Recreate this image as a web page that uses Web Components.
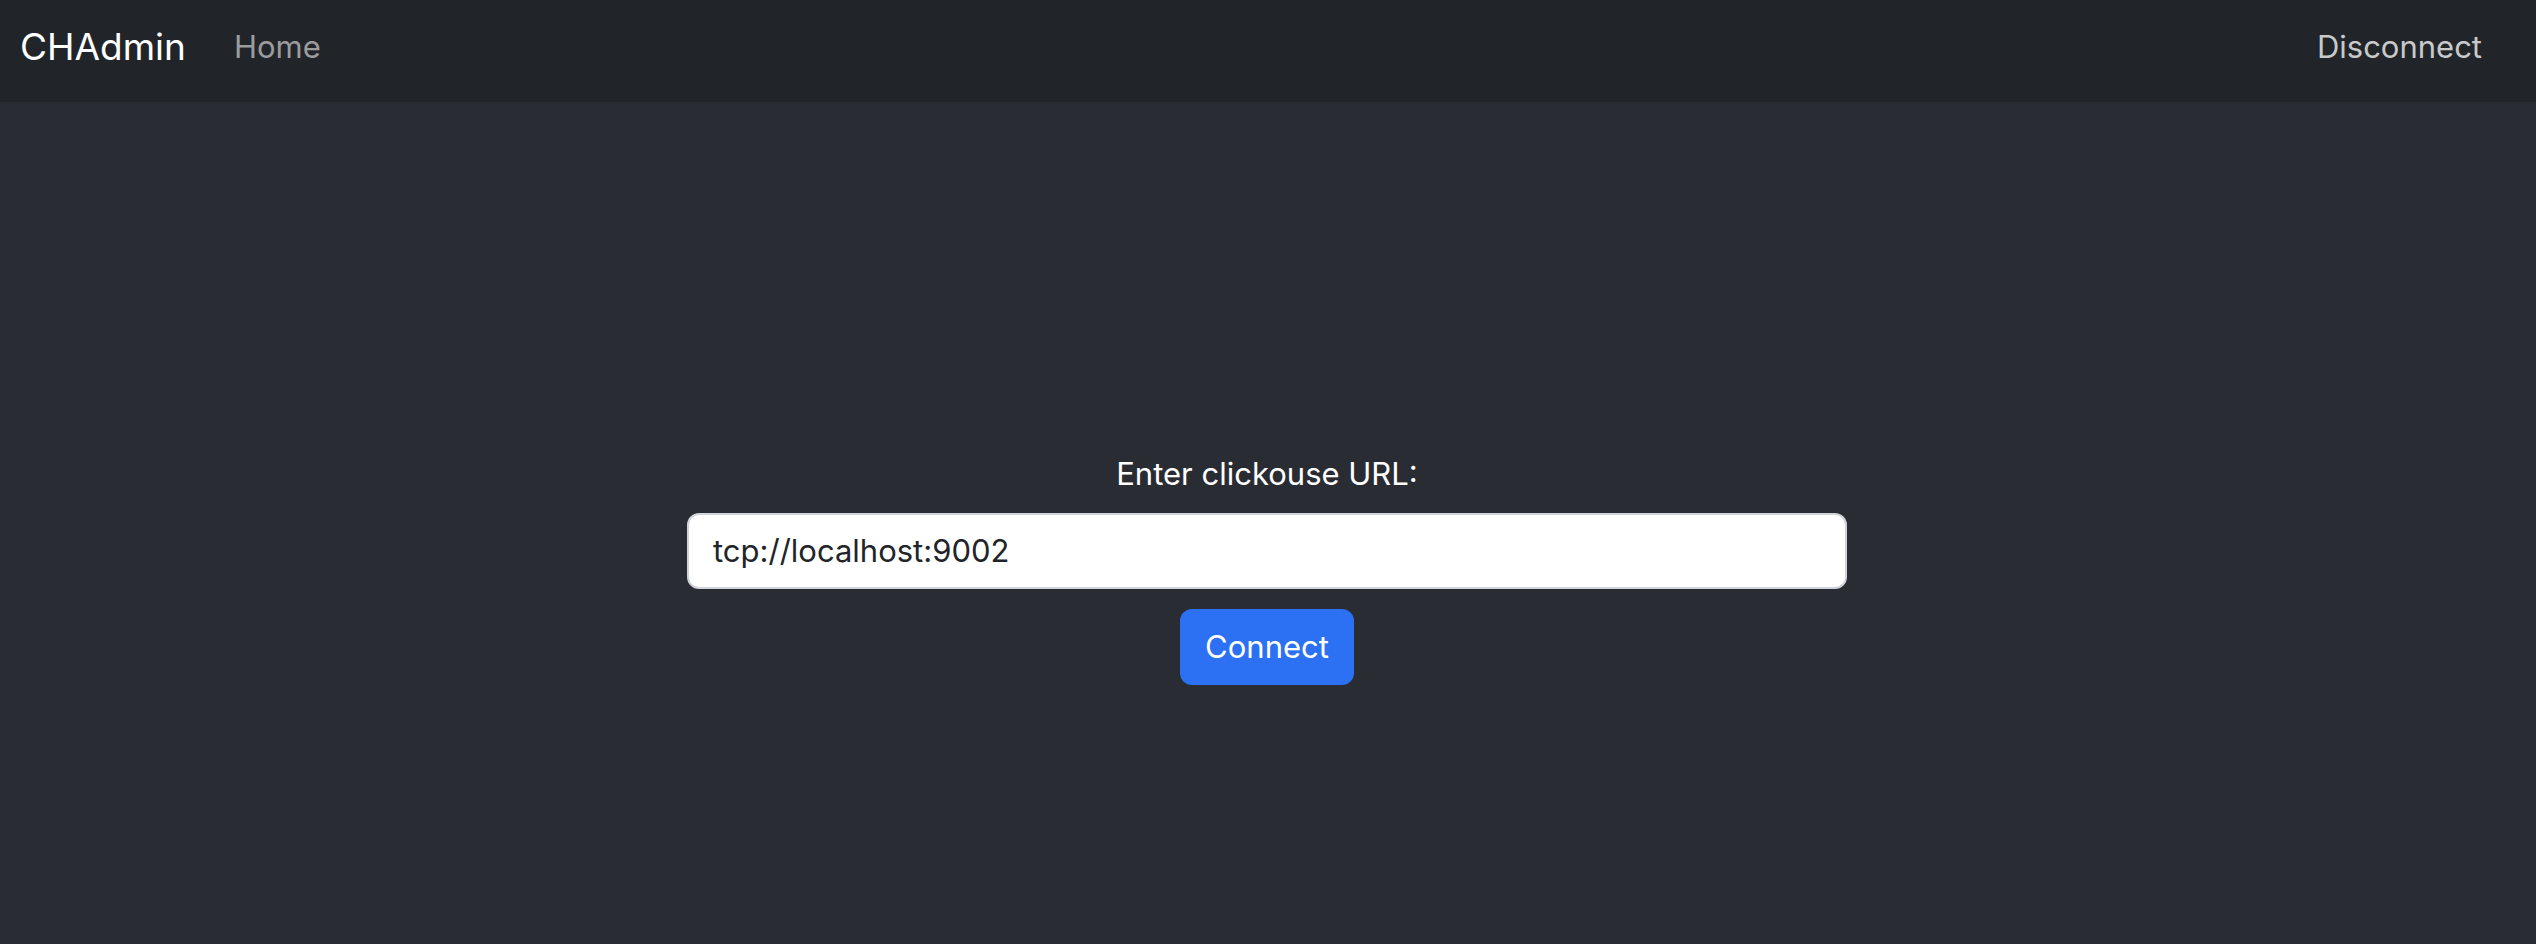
<!DOCTYPE html>
<html lang="en">
<head>
<meta charset="utf-8">
<meta name="viewport" content="width=device-width, initial-scale=1">
<title>CHAdmin</title>
<style>
  body { margin: 0; background: #2a2c34; color: #fff; font: 31px/48px Inter, "Liberation Sans", sans-serif; }
</style>
</head>
<body>
<ch-app>
  <ch-navbar slot="header" brand="CHAdmin">
    <ch-nav-link href="#home">Home</ch-nav-link>
    <ch-nav-link slot="end" href="#disconnect" active>Disconnect</ch-nav-link>
  </ch-navbar>
  <ch-connect-form url="tcp://localhost:9002">Enter clickouse URL:</ch-connect-form>
</ch-app>
<script>
class ChElement extends HTMLElement {
  constructor() {
    super();
    this.attachShadow({ mode: 'open' }).innerHTML = this.constructor.markup;
  }
}

customElements.define('ch-app', class extends ChElement {
  static markup = `
    <style>
      :host { display: flex; flex-direction: column; min-height: 100vh; }
      main { flex: 1; display: grid; align-content: center; justify-items: center; padding: 88px 2px 0 0; }
    </style>
    <slot name="header"></slot>
    <main><slot></slot></main>`;
});

customElements.define('ch-navbar', class extends ChElement {
  static markup = `
    <style>
      :host { display: block; background: #212529; }
      nav { display: flex; align-items: center; padding: 16px 20px 24px; }
      .brand { color: #fff; font-size: 37px; line-height: 62px; text-decoration: none; margin-right: 32px; }
      .end { margin-left: auto; padding-right: 18px; }
    </style>
    <nav><a class="brand" href="#"></a><slot></slot><div class="end"><slot name="end"></slot></div></nav>`;
  connectedCallback() {
    this.shadowRoot.querySelector('.brand').textContent = this.getAttribute('brand');
  }
});

customElements.define('ch-nav-link', class extends ChElement {
  static markup = `
    <style>
      :host { display: block; color: #9b9c9e; }
      :host([active]) { color: #c8c9ca; }
      a { display: block; color: inherit; padding: 0 16px; text-decoration: none; }
    </style>
    <a><slot></slot></a>`;
  connectedCallback() {
    this.shadowRoot.querySelector('a').href = this.getAttribute('href');
  }
});

customElements.define('ch-connect-form', class extends ChElement {
  static markup = `
    <style>
      :host { display: block; width: 46%; max-width: 1160px; }
      form { display: flex; flex-direction: column; align-items: center; margin: 0; }
      label { margin-bottom: 15px; }
      input, button { box-sizing: border-box; height: 76px; margin: 0; border-radius: 12px; font: inherit; }
      input { width: 100%; padding: 12px 24px; border: 2px solid #ced4da; background: #fff; color: #212529; outline: 0; }
      button { margin-top: 20px; padding: 14px 25px; border: 0; background: #2c71f4; color: #fff; }
    </style>
    <form>
      <label for="url"><slot></slot></label>
      <input id="url" type="text" spellcheck="false">
      <button type="button">Connect</button>
    </form>`;
  connectedCallback() {
    this.shadowRoot.querySelector('input').value = this.getAttribute('url');
  }
});
</script>
</body>
</html>
